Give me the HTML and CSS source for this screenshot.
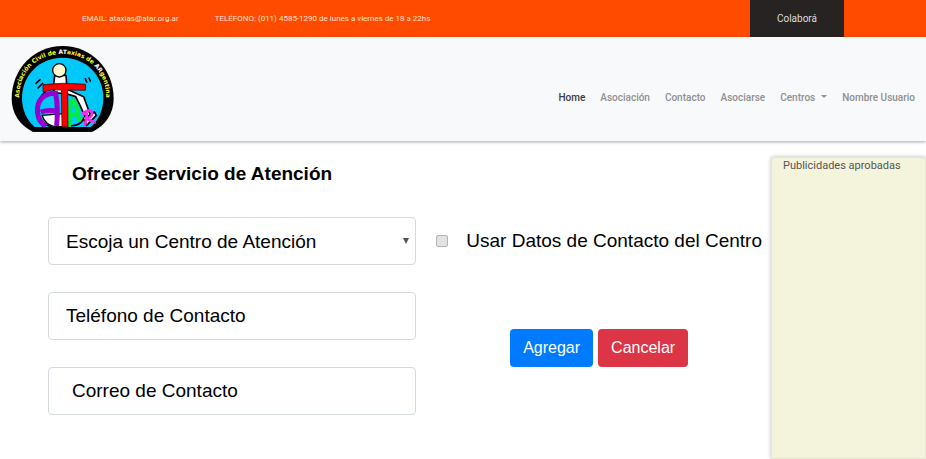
FILE: index.html
```html
<!DOCTYPE html>
<html lang="es">
<head>
<meta charset="utf-8">
<meta name="viewport" content="width=device-width, initial-scale=1">
<title>Ofrecer Servicio de Atención</title>
<link rel="stylesheet" href="styles.css">
</head>
<body>
<div class="topbar">
  <div class="contact">
    <span>EMAIL: ataxias@atar.org.ar</span>
    <span>TELÉFONO: (011) 4585-1290 de lunes a viernes de 18 a 22hs</span>
  </div>
  <a class="donate" href="#">Colaborá</a>
</div>
<header class="header">
  <a class="brand" href="#" aria-label="ATAR">
    <svg class="logo" viewBox="33 27 312 264" aria-hidden="true">
      <path d="M98 287C60 268 35 232 35 188C35 98 103 30 188 30S341 98 341 188C341 232 316 268 278 287Z" fill="#000"/>
      <path d="M104 273C80 252 66 222 66 186C66 116 120 65 188 65S310 116 310 186C310 222 296 252 272 273Z" fill="#00c8fa"/>
      <path id="arc" d="M65 232C36 130 96 54 188 54S340 130 311 232" fill="none"/>
      <text class="logo-text"><textPath href="#arc" startOffset="50%" text-anchor="middle">Asociación Civil de <tspan class="logo-strong">AT</tspan>axias de <tspan class="logo-strong">AR</tspan>gentina</textPath></text>
      <g stroke="#000" stroke-linecap="round" stroke-linejoin="round">
        <path d="M108 142l12-11M114 156l14-14M256 128l4 10M267 126l4 9" fill="none" stroke-width="5"/>
        <path d="M164 118l-3 28 1 24 40 4 25 8 12 24 22 48 14-6-24-66-46-21-5-15-2-28Z" fill="#fff" stroke-width="5"/>
        <circle cx="178" cy="103" r="20" fill="#fffbd0" stroke-width="4"/>
        <path d="M126 238q10 30 40 34h36v-40Z" fill="#fff" stroke-width="4"/>
        <path d="M136 168q-22 15-24 50 4 42 44 56M204 268q40 8 56-36" fill="none" stroke-width="5"/>
        <path d="M250 246l10 22 29-30-6-10-18 12" fill="#fff" stroke-width="5"/>
      </g>
      <path d="M138 271C106 252 106 206 126 186Q142 171 167 172Q175 216 170 270M122 228q24-8 48-2" fill="none" stroke="#9500d0" stroke-width="15"/>
      <path d="M208 268q0-36 4-70 6-12 14 2l12 52M211 237l22-3" fill="none" stroke="#00ed39" stroke-width="12" stroke-linecap="round" stroke-linejoin="round"/>
      <path d="M129 146Q190 138 257 145L256 163 203 162 204 273H186L184 162Q156 159 129 168Z" fill="#f80000" stroke="#250000" stroke-width="2"/>
      <path d="M255 268l6-35q-12 2-12-2 18-12 25-6 8 14-12 24l22 10" fill="none" stroke="#ff26f5" stroke-width="8" stroke-linejoin="round" stroke-linecap="round"/>
      <path d="M94 273h188l-8 14H98Z" fill="#000"/>
    </svg>
  </a>
  <nav class="nav">
    <a class="active" href="#">Home</a>
    <a href="#">Asociación</a>
    <a href="#">Contacto</a>
    <a href="#">Asociarse</a>
    <a class="dropdown" href="#">Centros</a>
    <a href="#">Nombre Usuario</a>
  </nav>
</header>
<div class="page">
  <main class="main">
    <h1>Ofrecer Servicio de Atención</h1>
    <form class="form">
      <div class="fields">
        <select class="field" aria-label="Centro de Atención"><option>Escoja un Centro de Atención</option></select>
        <input class="field" type="tel" aria-label="Teléfono de Contacto" placeholder="Teléfono de Contacto">
        <input class="field" type="email" aria-label="Correo de Contacto" placeholder="Correo de Contacto">
      </div>
      <div class="side">
        <label class="check"><input type="checkbox"><span>Usar Datos de Contacto del Centro</span></label>
        <div class="actions">
          <button class="btn primary" type="submit">Agregar</button>
          <button class="btn danger" type="button">Cancelar</button>
        </div>
      </div>
    </form>
  </main>
  <aside class="ads">Publicidades aprobadas</aside>
</div>
</body>
</html>
```
FILE: styles.css
```css
* {
  box-sizing: border-box;
}

body {
  display: flex;
  flex-direction: column;
  min-height: 100vh;
  margin: 0;
  background: #fff;
  color: #000;
  font-family: "Liberation Sans", Arial, sans-serif;
  font-size: 19px;
}

a {
  color: inherit;
  text-decoration: none;
}

.topbar {
  display: flex;
  justify-content: space-between;
  align-items: stretch;
  padding: 0 82px;
  background: #ff4b00;
  color: #ffe0d2;
  font-family: Roboto, sans-serif;
  font-size: 8px;
  line-height: 37px;
}

.contact {
  display: flex;
  gap: 36px;
}

.donate {
  padding: 0 27px;
  background: #272322;
  color: #ddd;
  font-size: 10px;
}

.header {
  display: flex;
  justify-content: space-between;
  align-items: center;
  padding: 8px 11px;
  background: #f8f9fb;
  box-shadow: 0 1px 3px rgba(0, 0, 0, 0.35);
}

.logo {
  display: block;
  width: 104px;
  height: 88px;
}

.logo-text {
  fill: #ffff28;
  font-family: "DejaVu Sans", sans-serif;
  font-size: 18px;
  font-weight: bold;
}

.logo-strong {
  fill: #fff;
}

.nav {
  display: flex;
  gap: 15px;
  padding-top: 17px;
  color: #8f9091;
  font-family: Roboto, sans-serif;
  font-size: 10px;
  font-weight: 500;
  line-height: 16px;
}

.nav .active {
  color: #3b3c3d;
}

.dropdown::after {
  content: "";
  display: inline-block;
  margin-left: 6px;
  border: 3px solid transparent;
  border-top-color: currentColor;
  border-bottom: 0;
  vertical-align: 3px;
}

.page {
  display: flex;
  flex: 1;
  gap: 9px;
  padding-top: 16px;
}

.main {
  flex: 1;
  padding-left: 48px;
}

h1 {
  margin: 0 0 32px;
  padding: 6px 24px 0;
  font-size: 19px;
  line-height: 22px;
}

.form {
  display: flex;
  gap: 20px;
}

.fields {
  display: flex;
  flex: 1;
  flex-direction: column;
  gap: 27px;
}

.field {
  width: 100%;
  height: 48px;
  padding: 0 17px;
  border: 1px solid #d5dae0;
  border-radius: 4px;
  background: #fff;
  color: #000;
  font: inherit;
}

.field::placeholder {
  color: #000;
  opacity: 1;
}

select.field {
  appearance: none;
  background: #fff url("data:image/svg+xml,%3Csvg xmlns='http://www.w3.org/2000/svg' width='6' height='6'%3E%3Cpath d='M0 0h6L3 6z' fill='%23555'/%3E%3C/svg%3E") no-repeat right 6px center;
}

.field[type="email"] {
  padding-left: 23px;
}

.side {
  display: flex;
  flex-direction: column;
  gap: 64px;
}

.check {
  display: flex;
  align-items: center;
  gap: 18px;
  height: 48px;
  white-space: nowrap;
}

.check input {
  appearance: none;
  width: 12px;
  height: 12px;
  margin: 0;
  border: 1px solid #b4b4b4;
  border-radius: 2px;
  background: #e2e2e2;
}

.actions {
  display: flex;
  justify-content: center;
  gap: 5px;
}

.btn {
  padding: 0 13px;
  border: 0;
  border-radius: 4px;
  color: #fff;
  font-family: inherit;
  font-size: 16px;
  line-height: 38px;
}

.primary {
  background: #007bff;
}

.danger {
  background: #dc3545;
}

.ads {
  width: 155px;
  padding: 0 11px;
  border: 1px solid #e6e6d0;
  border-radius: 3px 3px 0 0;
  background: #f4f4dc;
  box-shadow: 0 0 4px rgba(0, 0, 0, 0.25);
  color: #555;
  font-family: Roboto, sans-serif;
  font-size: 11px;
  line-height: 16px;
}
```
